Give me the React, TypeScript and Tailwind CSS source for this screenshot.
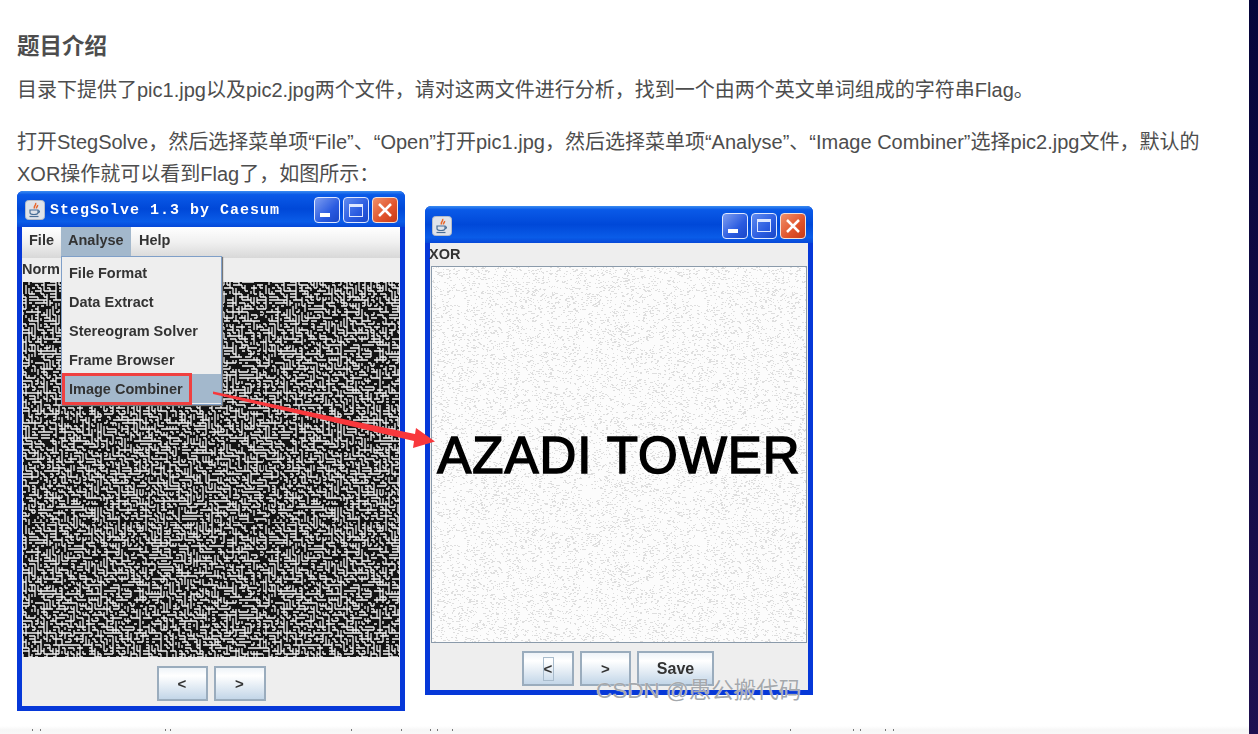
import React from "react";

// small seeded random so both noise images stay the same between renders
const makeRandom = (seed: number) => () => {
  seed = (seed + 0x6d2b79f5) | 0;
  let t = Math.imul(seed ^ (seed >>> 15), 1 | seed);
  t = (t + Math.imul(t ^ (t >>> 7), 61 | t)) ^ t;
  return ((t ^ (t >>> 14)) >>> 0) / 4294967296;
};

// labyrinth look: every grid node sends one short wall right or down
const mazePath = (() => {
  const r = makeRandom(7);
  const step = 3;
  let d = "";
  for (let y = 0; y < 80; y++) {
    for (let x = 0; x < 80; x++) {
      const pick = r();
      if (pick < 0.2) continue;
      const len = step + (r() > 0.8 ? step : 0);
      d += pick < 0.6 ? `M${x * step} ${y * step}h${len}` : `M${x * step} ${y * step}v${len}`;
    }
  }
  return d;
})();

const speckPath = (() => {
  const r = makeRandom(21);
  let d = "";
  for (let i = 0; i < 6000; i++) {
    const x = Math.floor(r() * 240);
    const y = Math.floor(r() * 240);
    const w = 1 + Math.floor(r() * 2);
    d += `M${x} ${y}h${w}v1h${-w}z`;
  }
  return d;
})();

const JavaIcon = () => (
  <svg width="20" height="20" viewBox="0 0 20 20" className="shrink-0">
    <rect x="0.5" y="0.5" width="19" height="19" rx="3" fill="#dfe3ea" stroke="#b5bcc8" />
    <path d="M10.5 3c1.5 2-2.5 3-1 5.5M12.5 5c.5 1.5-1.5 2-1 3.500" fill="none" stroke="#e8662a" strokeWidth="1.500" />
    <path d="M5 10h8v2.500c0 1.500-1.500 2-4 2s-4-.5-4-2zM13 10.500c2 0 2 2.500-.5 2.500" fill="none" stroke="#4a6f96" strokeWidth="1.200" />
    <path d="M4.500 16.500h9" stroke="#4a6f96" strokeWidth="1.200" />
  </svg>
);

const CaptionButtons = () => (
  <div className="flex gap-[3px]">
    <div className="w-[26px] h-[26px] rounded-[4px] border border-[#dfe8ff] bg-[linear-gradient(135deg,#7d9df0,#2a5be0_60%,#1a47c8)] flex items-end pl-[5px] pb-[5px]">
      <div className="w-[10px] h-[4px] bg-white" />
    </div>
    <div className="w-[26px] h-[26px] rounded-[4px] border border-[#dfe8ff] bg-[linear-gradient(135deg,#5f8bf0,#2a5be0_60%,#1a47c8)] flex items-center justify-center">
      <div className="w-[14px] h-[13px] border border-[#dfe8ff] border-t-[3px]" />
    </div>
    <div className="w-[26px] h-[26px] rounded-[4px] border border-[#f5e0d8] bg-[linear-gradient(135deg,#f0906a,#e0522a_60%,#c83a18)] flex items-center justify-center">
      <svg width="16" height="16" viewBox="0 0 16 16">
        <path d="M2 2l12 12M14 2L2 14" stroke="white" strokeWidth="2.500" />
      </svg>
    </div>
  </div>
);

const JavaButton = ({ label, className }: { label: React.ReactNode; className: string }) => (
  <div className={`h-[35px] border-2 border-[#9aacbd] bg-[linear-gradient(180deg,#eef3f8,#ffffff_25%,#c3d6e8)] flex items-center justify-center text-[15px] font-bold text-[#333] ${className}`}>
    {label}
  </div>
);

const MenuItem = ({ label, active }: { label: string; active?: boolean }) => (
  <div className={`h-[28.800px] flex items-center pl-[7px] ${active ? "bg-[#a3b8cc]" : ""}`}>{label}</div>
);

const App = () => {
  return (
    <div className="h-[734px] w-[1258px] overflow-hidden flex bg-white font-['Liberation_Sans','Noto_Sans_CJK_SC',sans-serif]">
      <main className="flex-1 min-w-0 flex flex-col">
        <div className="pl-[17px] pr-[30px] text-[20px] leading-[32px] text-[#4d4d4d]">
          <h2 className="mt-[31px] text-[22.500px] font-bold">题目介绍</h2>
          <p className="mt-[11px]">目录下提供了pic1.jpg以及pic2.jpg两个文件，请对这两文件进行分析，找到一个由两个英文单词组成的字符串Flag。</p>
          <p className="mt-[20px]">
            打开StegSolve，然后选择菜单项“File”、“Open”打开pic1.jpg，然后选择菜单项“Analyse”、“Image Combiner”选择pic2.jpg文件，默认的XOR操作就可以看到Flag了，如图所示：
          </p>

          <div className="relative mt-px flex items-start gap-[20px]">
            {/* StegSolve window */}
            <div className="relative w-[388px] h-[520px] flex flex-col rounded-t-[6px] bg-[#0638d8] blur-[0.35px]">
              <div className="h-[36px] shrink-0 rounded-t-[6px] pl-[8px] pr-[7px] pt-[2px] flex items-center gap-[5px] bg-[linear-gradient(180deg,#3a8cf0_0%,#0a5ae8_10%,#0048d8_50%,#0a5ce8_85%,#0648d8_100%)]">
                <JavaIcon />
                <span className="flex-1 pt-[2px] font-['Liberation_Mono',monospace] text-[15px] font-bold tracking-[1px] text-white">StegSolve 1.3 by Caesum</span>
                <CaptionButtons />
              </div>
              <div className="flex-1 min-h-0 mx-[5px] mb-[5px] flex flex-col bg-[#eeeeee] text-[#333]">
                <div className="h-[31px] shrink-0 flex text-[14.500px] font-bold bg-[linear-gradient(180deg,#ffffff,#f0f0f0_50%,#d8d8d8)]">
                  <div className="w-[39px] flex items-center pl-[7px] pb-[5px]">File</div>
                  <div className="w-[70px] flex items-center pl-[7px] pb-[5px] bg-[#a3b8cc]">Analyse</div>
                  <div className="flex items-center pl-[8px] pb-[5px]">Help</div>
                </div>
                <div className="h-[24px] shrink-0 flex items-center pb-[2px] text-[14.500px] font-bold">Norm</div>
                <div className="h-[375px] shrink-0 mx-px bg-[#141414]">
                  <svg className="block w-full h-full">
                    <defs>
                      <pattern id="maze" width="240" height="240" patternUnits="userSpaceOnUse">
                        <path d={mazePath} fill="none" stroke="#f2f2f2" strokeWidth="1.300" />
                      </pattern>
                    </defs>
                    <rect width="100%" height="100%" fill="url(#maze)" />
                  </svg>
                </div>
                <div className="flex-1 flex justify-center items-start pt-[9px] gap-[6px]">
                  <JavaButton label="<" className="w-[51px]" />
                  <JavaButton label=">" className="w-[52px]" />
                </div>
              </div>

              {/* open Analyse menu */}
              <div className="absolute left-[44px] top-[65px] w-[161px] h-[149px] pt-[2px] bg-[#eeeeee] border border-[#7f9fc8] shadow-[1px_1px_1px_#777] text-[14.500px] font-bold text-[#333]">
                <MenuItem label="File Format" />
                <MenuItem label="Data Extract" />
                <MenuItem label="Stereogram Solver" />
                <MenuItem label="Frame Browser" />
                <MenuItem label="Image Combiner" active />
              </div>
              <div className="absolute left-[45px] top-[182px] w-[130px] h-[32px] border-[3px] border-[#f04040]" />
            </div>

            {/* XOR result window */}
            <div className="mt-[15px] w-[388px] h-[489px] flex flex-col rounded-t-[6px] bg-[#0638d8] blur-[0.35px]">
              <div className="h-[37px] shrink-0 rounded-t-[6px] pl-[7px] pr-[7px] pt-[2px] flex items-center justify-between bg-[linear-gradient(180deg,#3a8cf0_0%,#0a5ae8_10%,#0048d8_50%,#0a5ce8_85%,#0648d8_100%)]">
                <JavaIcon />
                <CaptionButtons />
              </div>
              <div className="flex-1 min-h-0 mx-[5px] mb-[5px] flex flex-col bg-[#eeeeee] text-[#333]">
                <div className="h-[23px] shrink-0 flex items-center pb-[2px] -ml-px text-[14.500px] font-bold">XOR</div>
                <div className="h-[377px] shrink-0 mx-px border border-[#8a9aaa] bg-[#fcfcfc] relative flex items-center justify-center overflow-hidden">
                  <svg className="absolute inset-0 w-full h-full blur-[0.7px]">
                    <defs>
                      <pattern id="specks" width="240" height="240" patternUnits="userSpaceOnUse">
                        <path d={speckPath} fill="#dedede" />
                      </pattern>
                    </defs>
                    <rect width="100%" height="100%" fill="url(#specks)" />
                  </svg>
                  <span className="relative text-[51px] leading-none tracking-[1px] text-black [-webkit-text-stroke:1.500px_black] whitespace-nowrap mt-[2px]">AZADI TOWER</span>
                </div>
                <div className="flex-1 flex justify-center items-start pt-[8px] gap-[6px] pr-[2px]">
                  <JavaButton
                    label={<span className="w-[11px] h-[24px] border border-[#a9bccd] flex items-center justify-center">&lt;</span>}
                    className="w-[52px]"
                  />
                  <JavaButton label=">" className="w-[51px]" />
                  <JavaButton label="Save" className="w-[77px] text-[16px]" />
                </div>
              </div>
            </div>

            {/* arrow from the menu to the result window */}
            <svg className="absolute left-[-17px] top-0 pointer-events-none" width="480" height="300" viewBox="0 191 480 300">
              <path d="M213 391.500L213 394L414 441L413 448L435 441.500L416 428L415 434z" fill="#f8383c" />
            </svg>

            {/* CSDN watermark */}
            <span className="absolute left-[579px] top-[486px] text-[22.500px] leading-[28px] text-[#a4a8ac] [text-shadow:0_0_1px_#ffffff] whitespace-nowrap">CSDN @愚公搬代码</span>
          </div>
        </div>

        {/* next page section just cut off at the window edge */}
        <div className="mt-auto h-[8px] shrink-0 bg-[linear-gradient(180deg,#ffffff,#f6f6f6_50%,#f8f8f8)] relative">
          <svg className="absolute left-0 top-[3px]" width="1249" height="2">
            <path d="M32 0h1v2h-1zM40 0h1v2h-1zM165 0h1v2h-1zM170 0h1v2h-1zM351 0h1v2h-1zM401 0h1v2h-1zM430 0h1v2h-1zM437 0h1v2h-1zM452 0h1v2h-1zM790 0h1v2h-1zM853 0h1v2h-1zM860 0h1v2h-1zM885 0h1v2h-1zM893 0h1v2h-1z" fill="#777" />
          </svg>
        </div>
      </main>
      <aside className="w-[9px] shrink-0 bg-[linear-gradient(180deg,#05053a,#1f1050)]" />
    </div>
  );
};

export default App;
